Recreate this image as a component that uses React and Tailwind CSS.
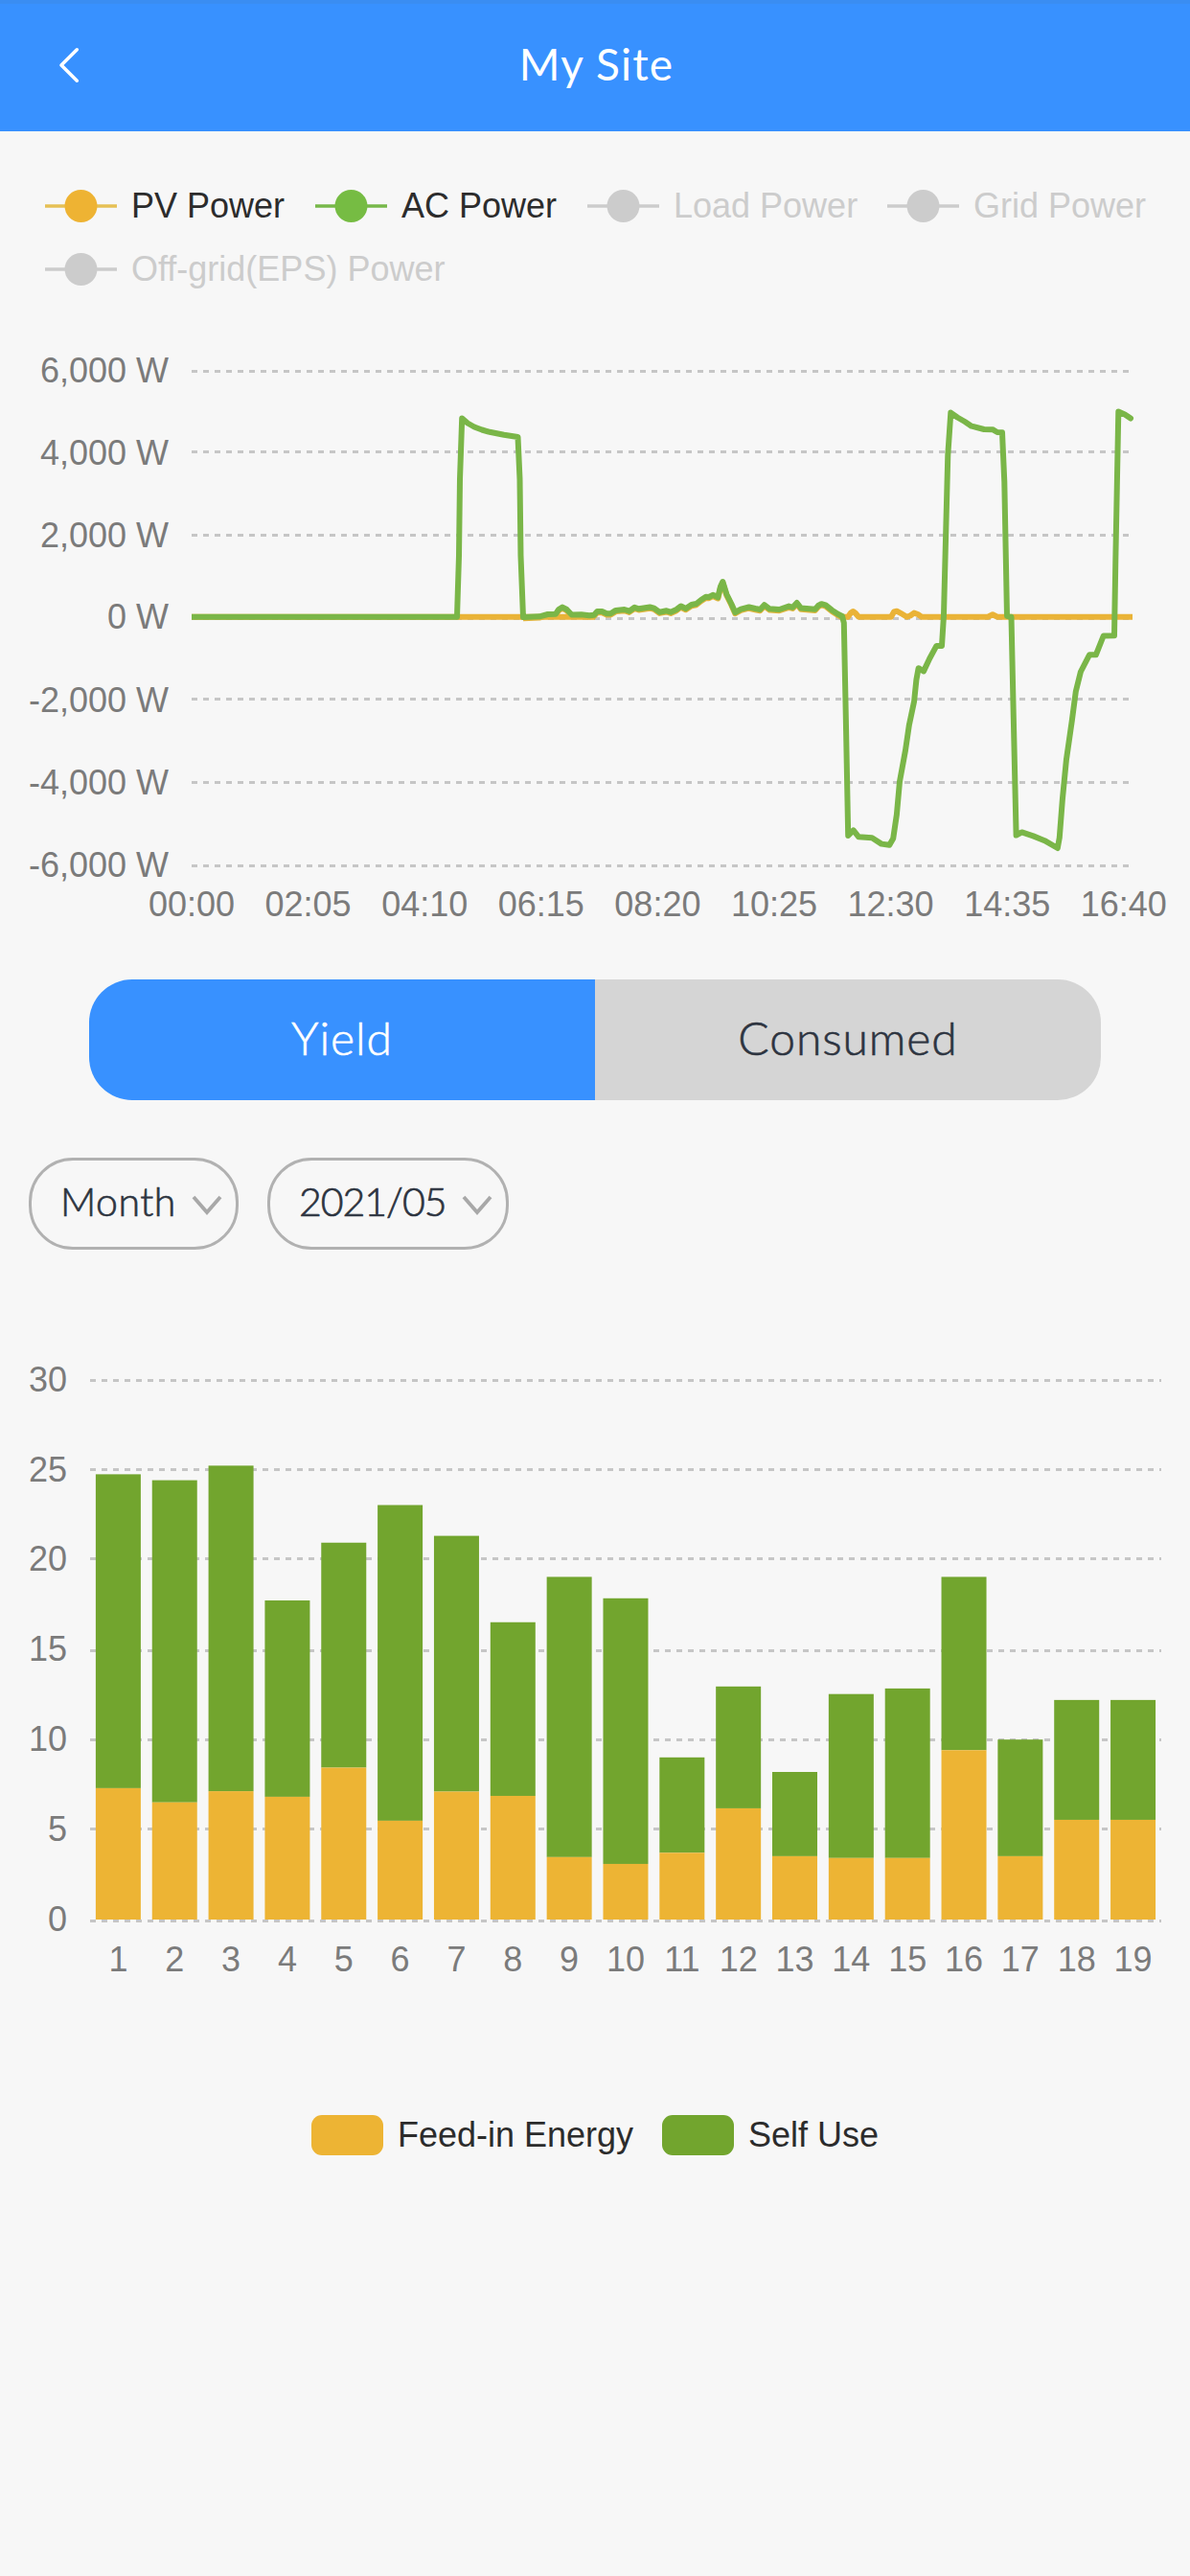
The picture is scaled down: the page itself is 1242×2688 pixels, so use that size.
import React from "react";

const SANS = "font-['Liberation_Sans',Arial,sans-serif]";

const powerLegend = [
  { label: "PV Power", line: "#e6c055", dot: "#eeb333", active: true, width: "w-[282px]" },
  { label: "AC Power", line: "#77b84a", dot: "#76bc43", active: true, width: "w-[284px]" },
  { label: "Load Power", line: "#cccccc", dot: "#cccccc", active: false, width: "w-[313px]" },
  { label: "Grid Power", line: "#cccccc", dot: "#cccccc", active: false, width: "w-[300px]" },
  { label: "Off-grid(EPS) Power", line: "#cccccc", dot: "#cccccc", active: false, width: "w-[430px]" },
];

const powerTicks = [
  { label: "6,000 W", grid: 387.5, base: 398.5 },
  { label: "4,000 W", grid: 471.5, base: 484.5 },
  { label: "2,000 W", grid: 558.5, base: 570.5 },
  { label: "0 W", grid: 645.5, base: 656 },
  { label: "-2,000 W", grid: 729.5, base: 742.5 },
  { label: "-4,000 W", grid: 816.5, base: 828.5 },
  { label: "-6,000 W", grid: 903.5, base: 914.5 },
];

const timeTicks = ["00:00", "02:05", "04:10", "06:15", "08:20", "10:25", "12:30", "14:35", "16:40"];

const daytime =
  "546,644 563,643.3 571.7,641 580,640.7 583,636 587,633.6 591.5,636 596.7,641.5 606.7,641.3 615,642.3 620,641.7 623.3,638 628.3,638 633.3,640.3 637.3,640.3 642.7,636.9 651.7,636 656.7,637.7 662.3,633.8 666.7,635.3 678.3,633.5 682.7,634.6 688.3,638.7 695.7,637.3 700,638.7 706,636 710.7,632.5 715.7,635 721.7,631 726.7,630 731.7,626 736.7,622.8 740,623 744,620.8 749.3,623.3 752,612 754.3,607 758.3,620 763.3,630 767.3,639 773.3,635.7 781.7,633.5 788.3,635 793.3,636 797.7,631.2 803.3,635.3 813.3,636 823.3,632.6 827.3,633.8 831.7,629 836,634.6 850.7,635.7 854,632 857.3,630.2 861.7,631.4 868.3,636.7 875,641 879,643";

const acLine =
  "200,643.7 477,643.7 479,580 480,500 482.2,436.4 488,441.5 495,445.5 503,448.5 511,450.8 526,453.8 540.5,456 542.5,500 543.5,580 " +
  daytime +
  " 880.8,650 882.8,748 885.2,872 890.7,866.4 896.2,873.3 910.1,874.3 920,880.6 928.3,881.8 932.2,875 935.9,850 939,815.5 945,782.9 948.9,756.3 954.1,731.8 956.4,709.4 958.6,697.2 964,700.4 970.3,687 977.4,673.9 983,673.9 985,642 987.3,552 989.3,474.7 992.3,430.6 999.2,435.5 1007,440 1014,444.7 1027,448 1036,448.2 1040.8,451 1046,451.3 1048.3,503 1051,642.7 1055.5,643.7 1057.8,748 1060.6,871.6 1066.5,868.4 1078.4,872.4 1090.3,877.2 1103.8,885 1105.8,874 1108.9,834 1112.9,793 1118.8,752 1122.8,721.6 1127.9,701 1137,683.3 1143.8,683.3 1151.7,663.5 1163,663.3 1164.3,585 1167.3,429.5 1174,432.5 1180,436.5";

const days = [
  [7.3, 24.74], [6.51, 24.41], [7.13, 25.22], [6.82, 17.73], [8.44, 20.94],
  [5.49, 23.03], [7.11, 21.32], [6.87, 16.52], [3.47, 19.04], [3.09, 17.85],
  [3.71, 9.01], [6.18, 12.95], [3.52, 8.2], [3.42, 12.53], [3.42, 12.84],
  [9.41, 19.04], [3.52, 10], [5.54, 12.2], [5.54, 12.2],
];

const energyTicks = [
  { label: 30, grid: 1440.5 }, { label: 25, grid: 1533.5 }, { label: 20, grid: 1626.5 },
  { label: 15, grid: 1722.5 }, { label: 10, grid: 1815.5 }, { label: 5, grid: 1908.5 },
  { label: 0, grid: 2004.5 },
];

function Header() {
  return (
    <header className="grid h-[137px] grid-cols-[200px_1fr_200px] items-center border-t-[4px] border-[#3a8df2] bg-[#3891ff] text-white">
      <svg className="-mt-[5px] ml-[60px] h-[42px] w-[28px]" viewBox="0 0 28 42" fill="none" stroke="currentColor" strokeWidth="3.6" strokeLinecap="round" strokeLinejoin="round">
        <path d="M20.3 4.8 L4 21 L20.3 37.2" />
      </svg>
      <h1 className="-mt-2 pl-[3px] text-center text-[46px] leading-[60px] tracking-[1.2px]">My Site</h1>
    </header>
  );
}

function PowerLegend() {
  return (
    <div className="flex h-[203px] flex-wrap content-start pl-[47px] pt-[45px]">
      {powerLegend.map((item) => (
        <div key={item.label} className={`flex h-[66px] items-center gap-[15px] ${item.width}`}>
          <svg className="h-9 w-[75px] shrink-0" viewBox="0 0 75 36">
            <line x1="0" x2="75" y1="18" y2="18" stroke={item.line} strokeWidth="3.5" />
            <circle cx="37.5" cy="18" r="17" fill={item.dot} />
          </svg>
          <span className={`whitespace-nowrap text-[36px] leading-[42px] ${SANS} ${item.active ? "text-[#2c2c2c]" : "text-[#cccccc]"}`}>
            {item.label}
          </span>
        </div>
      ))}
    </div>
  );
}

function PowerChart() {
  return (
    <svg className={`block h-[640px] w-[1242px] text-[36px] ${SANS}`} viewBox="0 340 1242 640">
      {powerTicks.map((t) => (
        <g key={t.label}>
          <line x1="200" x2="1178" y1={t.grid} y2={t.grid} stroke="#c6c6c6" strokeWidth="3" strokeDasharray="6 6" />
          <text x="176" y={t.base} textAnchor="end" fill="#7b7b7b">{t.label}</text>
        </g>
      ))}
      {timeTicks.map((t, i) => (
        <text key={t} x={200 + i * 121.6} y="955.5" textAnchor="middle" fill="#7b7b7b">{t}</text>
      ))}
      <g fill="none" strokeWidth="6" strokeLinejoin="round">
        <path stroke="#eab337" d="M200 643.7 H621 M878 643.7 H885 L888 639.5 L890.3 638 L893 640 L896 643.7 H930 L933 638.5 L936 637.7 L940 639.8 L946.5 643.7 L950 642.5 L954 639.6 L958 641 L962 643.7 H1031 L1036 641.3 L1041 643.7 H1182" />
        <polyline stroke="#e2b53d" points={daytime} transform="translate(0 1.2)" />
        <polyline stroke="#7ab648" strokeLinecap="round" points={acLine} />
      </g>
      <rect x="194" y="640" width="6" height="8" fill="#f7f7f7" />
    </svg>
  );
}

function Tabs() {
  return (
    <div className="mx-[93px] mt-[42px] grid h-[126px] grid-cols-2 overflow-hidden rounded-[45px] text-[48px] leading-[60px] tracking-[0.9px] [-webkit-text-stroke:0.6px]">
      <button className="bg-[#3891ff] pb-1 font-light text-white">Yield</button>
      <button className="bg-[#d5d5d5] pb-1 font-light text-[#2d3440]">Consumed</button>
    </div>
  );
}

function Select({ label, className }) {
  return (
    <button className={`flex h-[96px] items-center justify-between rounded-[46px] border-[3px] border-[#b1b1b1] pl-[30px] pr-[13px] text-[41px] font-light text-[#2d3440] [-webkit-text-stroke:0.7px] ${className}`}>
      <span className="-mt-1 leading-[52px]">{label}</span>
      <svg className="mt-1 h-6 w-[34px]" viewBox="0 0 34 24" fill="none" stroke="#a8a8a8" strokeWidth="3.8">
        <path d="M3 3 L17 19 L31 3" />
      </svg>
    </button>
  );
}

function EnergyChart() {
  const unit = 18.78;
  const zero = 2003;
  const band = 1118 / 19;
  return (
    <svg className={`mt-[96px] block h-[700px] w-[1242px] text-[36px] ${SANS}`} viewBox="0 1400 1242 700">
      {energyTicks.map((t) => (
        <g key={t.label}>
          <line x1="94" x2="1212" y1={t.grid} y2={t.grid} stroke="#c6c6c6" strokeWidth="3" strokeDasharray="6 6" />
          <text x="70" y={zero + 12 - t.label * unit} textAnchor="end" fill="#7b7b7b">{t.label}</text>
        </g>
      ))}
      {days.map(([feed, total], i) => {
        const x = 94 + i * band + 5.9;
        return (
          <g key={i}>
            <rect x={x} y={zero - total * unit} width="47" height={(total - feed) * unit} fill="#72a52e" />
            <rect x={x} y={zero - feed * unit} width="47" height={feed * unit} fill="#edb434" />
            <text x={x + 23.5} y="2057" textAnchor="middle" fill="#7b7b7b">{i + 1}</text>
          </g>
        );
      })}
    </svg>
  );
}

function EnergyLegend() {
  return (
    <div className={`mt-[106px] flex h-[44px] items-center justify-center gap-[30px] text-[36px] leading-[42px] text-[#2c2c2c] ${SANS}`}>
      <div className="flex items-center gap-[15px]">
        <span className="h-[42px] w-[75px] rounded-[11px] bg-[#edb434]" />
        <span>Feed-in Energy</span>
      </div>
      <div className="flex items-center gap-[15px]">
        <span className="h-[42px] w-[75px] rounded-[11px] bg-[#72a52e]" />
        <span>Self Use</span>
      </div>
    </div>
  );
}

export default function App() {
  return (
    <div className="h-[2688px] w-[1242px] overflow-hidden bg-[#f7f7f7] font-['Lato',sans-serif]">
      <Header />
      <PowerLegend />
      <PowerChart />
      <Tabs />
      <div className="mt-[60px] flex gap-[30px] pl-[30px]">
        <Select label="Month" className="w-[219px] tracking-[0.5px]" />
        <Select label="2021/05" className="w-[252px] tracking-[-1px]" />
      </div>
      <EnergyChart />
      <EnergyLegend />
    </div>
  );
}
